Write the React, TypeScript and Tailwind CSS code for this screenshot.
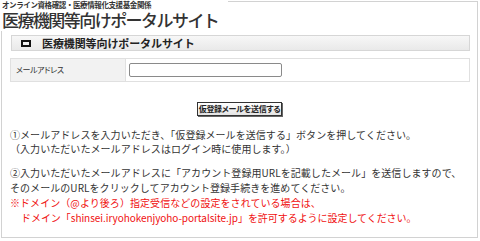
export default function App() {
  const jp = "font-['Noto_Sans_CJK_JP','Noto_Sans',sans-serif]";
  return (
    <div className={`w-[480px] h-[241px] bg-white overflow-hidden ${jp}`}>
      <div className="ml-[1px] mt-[1px] w-[477px] h-[237px] border border-[#d2d2d2]">
        {/* header */}
        <div className="-mt-[2px] -ml-[2px] w-[228px] h-[31px] bg-white pl-[2px]">
          <div className="text-[7.5px] leading-[9px] h-[10px] font-bold tracking-[-0.4px] text-[#333]">
            オンライン資格確認・医療情報化支援基金関係
          </div>
          <div className="text-[17px] leading-[20px] font-medium tracking-[-1.55px] text-[#333]">
            医療機関等向けポータルサイト
          </div>
        </div>

        {/* section bar */}
        <div className="ml-[9px] mt-[4px] w-[459px] h-[16px] border border-[#d6d6d6] bg-gradient-to-b from-[#f7f7f7] to-[#e9e9e9] flex items-center">
          <div className="ml-[9px] w-[10px] h-[7px] border-2 border-[#111]" />
          <div className="ml-[11px] text-[11px] leading-[12px] font-bold tracking-[-0.1px] text-[#222]">
            医療機関等向けポータルサイト
          </div>
        </div>

        {/* form row */}
        <div className="ml-[8px] mt-[7px] w-[460px] h-[24px] border border-[#e0e0e0] flex">
          <div className="w-[115px] h-full bg-[#f2f2f2] border-r border-[#e0e0e0] flex items-center pl-[5px] text-[8px] text-[#333] [font-feature-settings:'palt'] tracking-[-0.4px]">
            メールアドレス
          </div>
          <div className="flex items-center pl-[3px]">
            <div className="w-[153px] h-[14px] rounded-[2px] border border-[#8a8a8a] bg-white" />
          </div>
        </div>

        {/* button */}
        <div className="flex justify-center mt-[20px]">
          <div className="h-[14px] w-[85px] border border-[#333] bg-gradient-to-b from-[#ffffff] to-[#e4e4e4] flex items-center justify-center text-[8px] font-bold text-[#222] [font-feature-settings:'palt'] tracking-[-0.3px] shadow-[1px_1px_0_#666]">
            仮登録メールを送信する
          </div>
        </div>

        {/* instructions */}
        <div className="ml-[8px] mt-[12px] text-[10px] leading-[14px] tracking-[0.06px] text-[#333]">
          <div>①メールアドレスを入力いただき、「仮登録メールを送信する」ボタンを押してください。</div>
          <div>（入力いただいたメールアドレスはログイン時に使用します。）</div>
          <div className="mt-[10px]">②入力いただいたメールアドレスに「アカウント登録用URLを記載したメール」を送信しますので、</div>
          <div className="leading-[15px]">そのメールのURLをクリックしてアカウント登録手続きを進めてください。</div>
          <div className="text-[#f01010] leading-[15px]">※ドメイン（@より後ろ）指定受信などの設定をされている場合は、</div>
          <div className="text-[#f01010] leading-[15px] pl-[11px] tracking-[-0.05px]">ドメイン「shinsei.iryohokenjyoho-portalsite.jp」を許可するように設定してください。</div>
        </div>
      </div>
    </div>
  );
}
